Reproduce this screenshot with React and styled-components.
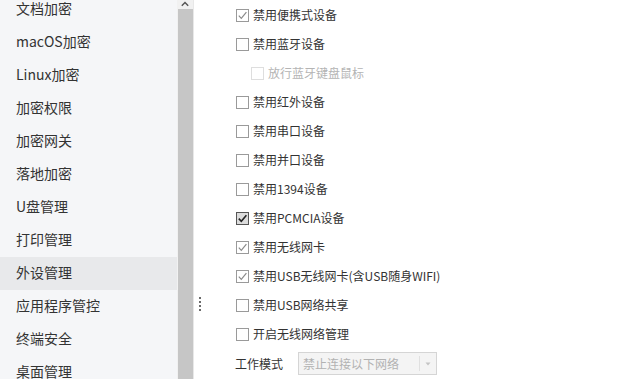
import React from "react";
import styled, { createGlobalStyle } from "styled-components";

const Global = createGlobalStyle`
  html, body { margin: 0; padding: 0; background: #fff; overflow: hidden; }
  body { font-family: "Noto Sans CJK SC", "Noto Sans", sans-serif; }
`;

const Page = styled.div`
  display: flex;
  width: 637px;
  height: 379px;
  overflow: hidden;
  background: #fff;
`;

const Sidebar = styled.nav`
  width: 177px;
  flex: none;
  background: #f5f6f8;
  overflow: hidden;
`;

const MenuList = styled.ul`
  list-style: none;
  margin: -7px 0 0;
  padding: 0;
`;

const MenuItem = styled.li`
  height: 33px;
  box-sizing: border-box;
  display: flex;
  align-items: center;
  padding: 0 0 3px 16px;
  font-size: 14px;
  color: #333;
  background: ${(p) => (p.$active ? "#e8e9eb" : "transparent")};
`;

const Scrollbar = styled.div`
  width: 16px;
  flex: none;
  display: flex;
  flex-direction: column;
  background: #f1f1f1;
  border-right: 1px solid #e8e8e8;
`;

const ScrollArrow = styled.div`
  height: 9px;
  display: flex;
  justify-content: center;
  align-items: flex-start;
  padding-top: 1px;
  box-sizing: border-box;
`;

const Thumb = styled.div`
  flex: 1;
  margin-left: 1px;
  background: #c6c6c6;
`;

const Splitter = styled.div`
  width: 14px;
  flex: none;
  display: flex;
  flex-direction: column;
  gap: 2px;
  padding: 297px 0 0 5px;
  box-sizing: border-box;
`;

const Dot = styled.span`
  width: 2px;
  height: 2px;
  background: #6a6a6a;
`;

const Content = styled.section`
  flex: 1;
  padding: 1px 0 0 28px;
  display: flex;
  flex-direction: column;
`;

const Row = styled.label`
  height: 29px;
  display: flex;
  align-items: center;
  gap: 4px;
  padding-left: ${(p) => (p.$indent ? "15px" : "0")};
  font-size: 12px;
  color: ${(p) => (p.$disabled ? "#b4b4b4" : "#333")};
  white-space: nowrap;
`;

const Label = styled.span`
  position: relative;
  top: -1px;
`;

const Box = styled.span`
  width: 13px;
  height: 13px;
  box-sizing: border-box;
  flex: none;
  display: flex;
  align-items: center;
  justify-content: center;
  border: 1px solid
    ${(p) =>
      p.$variant === "strong" ? "#555" : p.$variant === "disabled" ? "#dedede" : "#9a9a9a"};
  background: ${(p) => (p.$variant === "strong" ? "#dcdcdc" : "#fff")};
`;

const SelectRow = styled.div`
  height: 29px;
  display: flex;
  align-items: center;
  margin-left: -1px;
  gap: 15px;
  font-size: 12px;
  color: #333;
`;

const Select = styled.div`
  width: 139px;
  height: 23px;
  box-sizing: border-box;
  border: 1px solid #d5d5d5;
  background: #f4f4f4;
  display: flex;
  align-items: center;
  color: #b2b2b2;
  font-size: 12px;
`;

const SelectText = styled.span`
  flex: 1;
  padding-left: 4px;
`;

const SelectArrow = styled.span`
  width: 16px;
  height: 15px;
  border-left: 1px solid #e0e0e0;
  display: flex;
  align-items: center;
  justify-content: center;
`;

const Check = ({ color, width = 1.2 }) => (
  <svg width="11" height="11" viewBox="0 0 11 11">
    <path d="M1.8 5.6 L4.3 8.3 L9.4 2.2" fill="none" stroke={color} strokeWidth={width} />
  </svg>
);

const menu = [
  "文档加密",
  "macOS加密",
  "Linux加密",
  "加密权限",
  "加密网关",
  "落地加密",
  "U盘管理",
  "打印管理",
  "外设管理",
  "应用程序管控",
  "终端安全",
  "桌面管理",
];

const options = [
  { label: "禁用便携式设备", checked: "light" },
  { label: "禁用蓝牙设备" },
  { label: "放行蓝牙键盘鼠标", indent: true, disabled: true },
  { label: "禁用红外设备" },
  { label: "禁用串口设备" },
  { label: "禁用并口设备" },
  { label: "禁用1394设备" },
  { label: "禁用PCMCIA设备", checked: "strong" },
  { label: "禁用无线网卡", checked: "light" },
  { label: "禁用USB无线网卡(含USB随身WIFI)", checked: "light" },
  { label: "禁用USB网络共享" },
  { label: "开启无线网络管理" },
];

export default function App() {
  return (
    <Page>
      <Global />
      <Sidebar>
        <MenuList>
          {menu.map((m) => (
            <MenuItem key={m} $active={m === "外设管理"}>
              {m}
            </MenuItem>
          ))}
        </MenuList>
      </Sidebar>
      <Scrollbar>
        <ScrollArrow>
          <svg width="8" height="6" viewBox="0 0 8 6">
            <path d="M0.8 4.8 L4 1.4 L7.2 4.8" fill="none" stroke="#555" strokeWidth="1.4" />
          </svg>
        </ScrollArrow>
        <Thumb />
      </Scrollbar>
      <Splitter>
        <Dot />
        <Dot />
        <Dot />
        <Dot />
      </Splitter>
      <Content>
        {options.map((o) => (
          <Row key={o.label} $indent={o.indent} $disabled={o.disabled}>
            <Box
              $variant={
                o.checked === "strong" ? "strong" : o.disabled ? "disabled" : "normal"
              }
            >
              {o.checked === "light" && <Check color="#8a8a8a" />}
              {o.checked === "strong" && <Check color="#222" width={1.6} />}
            </Box>
            <Label>{o.label}</Label>
          </Row>
        ))}
        <SelectRow>
          工作模式
          <Select>
            <SelectText>禁止连接以下网络</SelectText>
            <SelectArrow>
              <svg width="6" height="4" viewBox="0 0 6 4">
                <path d="M0.5 0.5 L5.5 0.5 L3 3.5 Z" fill="#c4c4c4" />
              </svg>
            </SelectArrow>
          </Select>
        </SelectRow>
      </Content>
    </Page>
  );
}
